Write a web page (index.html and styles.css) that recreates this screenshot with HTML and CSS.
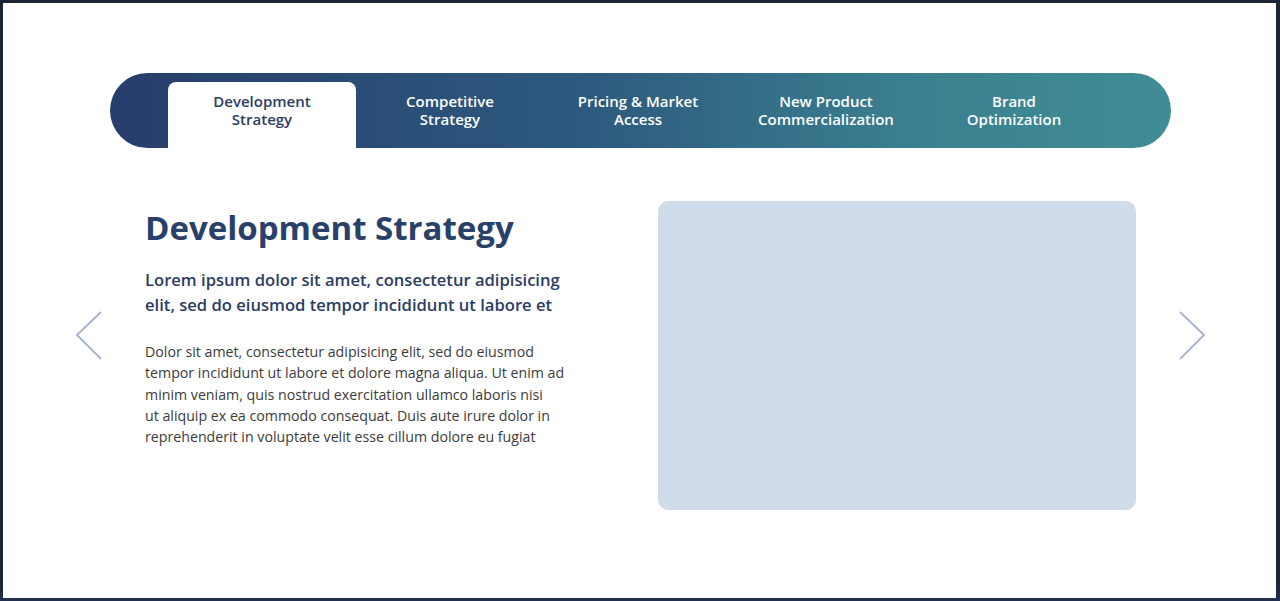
FILE: index.html
```html
<!DOCTYPE html>
<html lang="en">
<head>
<meta charset="utf-8">
<title>Development Strategy</title>
<link rel="stylesheet" href="styles.css">
</head>
<body>
<div class="frame">
  <main class="page">
    <nav class="tabs">
      <div class="tab active">Development<br>Strategy</div>
      <div class="tab">Competitive<br>Strategy</div>
      <div class="tab">Pricing &amp; Market<br>Access</div>
      <div class="tab">New Product<br>Commercialization</div>
      <div class="tab">Brand<br>Optimization</div>
    </nav>
    <section class="content">
      <button class="arrow" aria-label="Previous">
        <svg width="28" height="50" viewBox="0 0 28 50"><polyline points="26,1 2,24 26,48" fill="none" stroke="#aab6cf" stroke-width="2"/></svg>
      </button>
      <div class="text">
        <h1 class="title">Development Strategy</h1>
        <p class="lead">Lorem ipsum dolor sit amet, consectetur adipisicing<br>elit, sed do eiusmod tempor incididunt ut labore et</p>
        <p class="body">Dolor sit amet, consectetur adipisicing elit, sed do eiusmod<br>tempor incididunt ut labore et dolore magna aliqua. Ut enim ad<br>minim veniam, quis nostrud exercitation ullamco laboris nisi<br>ut aliquip ex ea commodo consequat. Duis aute irure dolor in<br>reprehenderit in voluptate velit esse cillum dolore eu fugiat</p>
      </div>
      <div class="media"></div>
      <button class="arrow" aria-label="Next">
        <svg width="28" height="50" viewBox="0 0 28 50"><polyline points="2,1 26,24 2,48" fill="none" stroke="#aab6cf" stroke-width="2"/></svg>
      </button>
    </section>
  </main>
</div>
</body>
</html>
```
FILE: styles.css
```css
* { box-sizing: border-box; }
html, body { margin: 0; padding: 0; }
body {
  font-family: "Open Sans", "Noto Sans", sans-serif;
  background: #1b2433;
}
.frame {
  height: 601px;
  padding: 3px 4px 3px 3px;
  background: linear-gradient(to bottom, #1c2535 0, #1c2535 97%, #22314f 100%);
}
.page {
  background: #ffffff;
  height: 595px;
  padding-top: 70px;
}
.tabs {
  margin-left: 107px;
  width: 1061px;
  height: 75px;
  border-radius: 38px;
  background: linear-gradient(to right, #273d6b 0%, #2d5a7e 45%, #3a7f8f 75%, #408d96 100%);
  display: flex;
  align-items: flex-end;
  padding-left: 58px;
}
.tab {
  width: 188px;
  height: 66px;
  padding-top: 10px;
  text-align: center;
  color: #ffffff;
  font-size: 15px;
  font-weight: 600;
  line-height: 18px;
}
.tab.active {
  background: #ffffff;
  color: #2b3d63;
  border-radius: 8px 8px 0 0;
}
.content {
  display: flex;
  align-items: flex-start;
  margin-top: 53px;
  padding-left: 72px;
}
.arrow {
  border: 0;
  background: none;
  padding: 0;
  margin-top: 110px;
  width: 28px;
  height: 50px;
}
.text {
  width: 440px;
  margin-left: 42px;
}
.title {
  margin: 7px 0 0;
  font-size: 33px;
  line-height: 40px;
  font-weight: 700;
  color: #28406a;
}
.lead {
  margin: 19px 0 0;
  font-size: 16.6px;
  line-height: 25px;
  font-weight: 600;
  color: #2b3d63;
}
.body {
  margin: 24px 0 0;
  font-size: 14.2px;
  line-height: 21.3px;
  color: #3b3b3b;
}
.media {
  width: 478px;
  height: 309px;
  margin-left: 73px;
  border-radius: 10px;
  background: #d1dcea;
}
.media + .arrow { margin-left: 42px; }
```
